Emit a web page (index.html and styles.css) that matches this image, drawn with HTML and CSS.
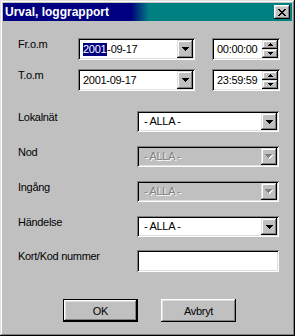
FILE: index.html
```html
<!DOCTYPE html>
<html lang="sv">
<head>
    <meta charset="UTF-8">
    <meta name="viewport" content="width=device-width, initial-scale=1.0">
    <title>Urval, loggrapport</title>
    <link rel="stylesheet" href="styles.css">
</head>
<body>
    <div class="window">
        <div class="titlebar">
            <span class="title">Urval, loggrapport</span>
            <span class="close-btn">
                <svg width="8" height="7" viewBox="0 0 8 7" shape-rendering="crispEdges"><path d="M0 0h2v1h-2zM6 0h2v1h-2zM1 1h2v1h-2zM5 1h2v1h-2zM2 2h4v1h-4zM3 3h2v1h-2zM2 4h4v1h-4zM1 5h2v1h-2zM5 5h2v1h-2zM0 6h2v1h-2zM6 6h2v1h-2z" fill="#000"/></svg>
            </span>
        </div>
        <div class="dialog-body">
            <div class="row date-row first">
                <span class="label">Fr.o.m</span>
                <div class="combo date-combo">
                    <span class="value"><span class="sel">2001</span>-09-17</span>
                    <span class="drop-btn"><svg width="7" height="4" viewBox="0 0 7 4" shape-rendering="crispEdges"><path d="M0 0h7v1h-1v1h-1v1h-1v1h-1v-1h-1v-1h-1v-1h-1z" fill="#000"/></svg></span>
                </div>
                <div class="field time-field">
                    <span class="value">00:00:00</span>
                    <span class="spin">
                        <span class="spin-btn"><svg width="5" height="3" viewBox="0 0 5 3" shape-rendering="crispEdges"><path d="M2 0h1v1h1v1h1v1h-5v-1h1v-1h1z" fill="#000"/></svg></span>
                        <span class="spin-btn"><svg width="5" height="3" viewBox="0 0 5 3" shape-rendering="crispEdges"><path d="M0 0h5v1h-1v1h-1v1h-1v-1h-1v-1h-1z" fill="#000"/></svg></span>
                    </span>
                </div>
            </div>
            <div class="row date-row second">
                <span class="label">T.o.m</span>
                <div class="combo date-combo">
                    <span class="value">2001-09-17</span>
                    <span class="drop-btn"><svg width="7" height="4" viewBox="0 0 7 4" shape-rendering="crispEdges"><path d="M0 0h7v1h-1v1h-1v1h-1v1h-1v-1h-1v-1h-1v-1h-1z" fill="#000"/></svg></span>
                </div>
                <div class="field time-field">
                    <span class="value">23:59:59</span>
                    <span class="spin">
                        <span class="spin-btn"><svg width="5" height="3" viewBox="0 0 5 3" shape-rendering="crispEdges"><path d="M2 0h1v1h1v1h1v1h-5v-1h1v-1h1z" fill="#000"/></svg></span>
                        <span class="spin-btn"><svg width="5" height="3" viewBox="0 0 5 3" shape-rendering="crispEdges"><path d="M0 0h5v1h-1v1h-1v1h-1v-1h-1v-1h-1z" fill="#000"/></svg></span>
                    </span>
                </div>
            </div>
            <div class="row select-row lokalnat">
                <span class="label">Lokalnät</span>
                <div class="combo select-combo">
                    <span class="value">- ALLA -</span>
                    <span class="drop-btn"><svg width="7" height="4" viewBox="0 0 7 4" shape-rendering="crispEdges"><path d="M0 0h7v1h-1v1h-1v1h-1v1h-1v-1h-1v-1h-1v-1h-1z" fill="#000"/></svg></span>
                </div>
            </div>
            <div class="row select-row">
                <span class="label">Nod</span>
                <div class="combo select-combo disabled">
                    <span class="value">- ALLA -</span>
                    <span class="drop-btn"><svg width="8" height="5" viewBox="0 0 8 5" shape-rendering="crispEdges"><path d="M1 1h7v1h-1v1h-1v1h-1v1h-1v-1h-1v-1h-1v-1h-1z" fill="#fff"/><path d="M0 0h7v1h-1v1h-1v1h-1v1h-1v-1h-1v-1h-1v-1h-1z" fill="#808080"/></svg></span>
                </div>
            </div>
            <div class="row select-row">
                <span class="label">Ingång</span>
                <div class="combo select-combo disabled">
                    <span class="value">- ALLA -</span>
                    <span class="drop-btn"><svg width="8" height="5" viewBox="0 0 8 5" shape-rendering="crispEdges"><path d="M1 1h7v1h-1v1h-1v1h-1v1h-1v-1h-1v-1h-1v-1h-1z" fill="#fff"/><path d="M0 0h7v1h-1v1h-1v1h-1v1h-1v-1h-1v-1h-1v-1h-1z" fill="#808080"/></svg></span>
                </div>
            </div>
            <div class="row select-row">
                <span class="label">Händelse</span>
                <div class="combo select-combo">
                    <span class="value">- ALLA -</span>
                    <span class="drop-btn"><svg width="7" height="4" viewBox="0 0 7 4" shape-rendering="crispEdges"><path d="M0 0h7v1h-1v1h-1v1h-1v1h-1v-1h-1v-1h-1v-1h-1z" fill="#000"/></svg></span>
                </div>
            </div>
            <div class="row select-row kort">
                <span class="label">Kort/Kod nummer</span>
                <div class="field text-field"></div>
            </div>
            <div class="button-row">
                <span class="btn default"><span class="btn-face">OK</span></span>
                <span class="btn"><span class="btn-face">Avbryt</span></span>
            </div>
        </div>
    </div>
</body>
</html>
```

FILE: styles.css
```css
body {
    margin: 0;
    font-family: "Liberation Sans", Arial, sans-serif;
    font-size: 11px;
    letter-spacing: -0.3px;
    color: #000;
    background-color: #c0c0c0;
}

.window {
    width: 295px;
    height: 336px;
    box-sizing: border-box;
    padding: 3px;
    background-color: #c0c0c0;
    box-shadow: inset -1px -1px #000, inset 1px 1px #dfdfdf, inset -2px -2px #808080, inset 2px 2px #fff;
}

.titlebar {
    height: 18px;
    display: flex;
    align-items: center;
    justify-content: space-between;
    background: linear-gradient(to right, #000080 128px, #008080 146px);
}

    .titlebar .title {
        padding-left: 2px;
        color: #fff;
        font-weight: bold;
        font-size: 12px;
        letter-spacing: 0;
    }

.close-btn {
    width: 16px;
    height: 14px;
    margin-right: 2px;
    box-sizing: border-box;
    display: flex;
    align-items: center;
    justify-content: center;
    padding-top: 1px;
    background-color: #c0c0c0;
    box-shadow: inset -1px -1px #000, inset 1px 1px #fff, inset -2px -2px #808080, inset 2px 2px #dfdfdf;
}

.dialog-body {
    padding-left: 15px;
}

.row {
    display: flex;
    align-items: flex-start;
}

    .row .label {
        line-height: 13px;
        flex-shrink: 0;
    }

.date-row .label {
    width: 60px;
}

.date-row.first {
    margin-top: 17px;
}

.date-row.second {
    margin-top: 9px;
}

.select-row .label {
    width: 119px;
}

.select-row {
    margin-top: 14px;
}

    .select-row.lokalnat {
        margin-top: 20px;
    }

    .select-row.kort {
        margin-top: 13px;
    }

/* sunken edit / combo frame */
.combo, .field {
    position: relative;
    box-sizing: border-box;
    display: flex;
    align-items: center;
    padding: 2px;
    background-color: #fff;
    box-shadow: inset 1px 1px #808080, inset -1px -1px #fff, inset 2px 2px #000, inset -2px -2px #dfdfdf;
}

    .combo .value, .field .value {
        flex: 1;
        padding-left: 3px;
        line-height: 13px;
        white-space: nowrap;
    }

.date-combo {
    width: 117px;
    height: 22px;
}

.time-field {
    width: 68px;
    height: 22px;
    margin-left: 17px;
}

.select-combo {
    width: 142px;
    height: 21px;
}

    .select-combo .value {
        padding-left: 5px;
    }

    .select-combo.disabled {
        background-color: #c0c0c0;
    }

        .select-combo.disabled .value {
            color: #808080;
            text-shadow: 1px 1px #fff;
        }

.text-field {
    width: 142px;
    height: 22px;
}

.sel {
    display: inline-block;
    background-color: #000080;
    color: #fff;
    padding: 0 1px 0 0;
}

.drop-btn {
    width: 16px;
    align-self: stretch;
    display: flex;
    align-items: center;
    justify-content: center;
    background-color: #c0c0c0;
    box-shadow: inset -1px -1px #000, inset 1px 1px #dfdfdf, inset -2px -2px #808080, inset 2px 2px #fff;
}

.spin {
    width: 16px;
    align-self: stretch;
    display: flex;
    flex-direction: column;
}

.spin-btn {
    flex: 1;
    display: flex;
    align-items: center;
    justify-content: center;
    background-color: #c0c0c0;
    box-shadow: inset -1px -1px #000, inset 1px 1px #dfdfdf, inset -2px -2px #808080, inset 2px 2px #fff;
}

.button-row {
    display: flex;
    gap: 23px;
    margin-top: 27px;
    padding-left: 45px;
}

.btn {
    width: 75px;
    height: 23px;
    box-sizing: border-box;
    display: flex;
}

    .btn.default {
        border: 1px solid #000;
    }

.btn-face {
    flex: 1;
    display: flex;
    align-items: center;
    justify-content: center;
    background-color: #c0c0c0;
    box-shadow: inset -1px -1px #000, inset 1px 1px #fff, inset -2px -2px #808080, inset 2px 2px #dfdfdf;
}
```
